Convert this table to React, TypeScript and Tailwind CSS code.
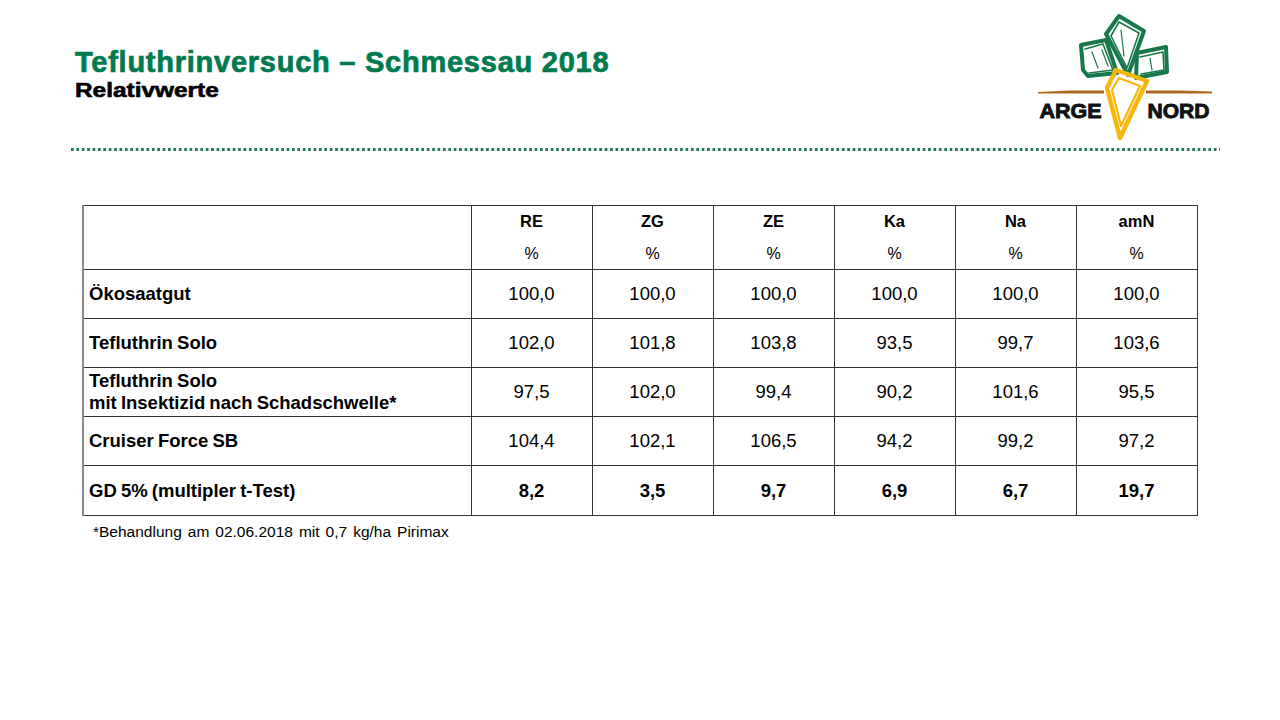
import React from 'react';

// ─── Data ──────────────────────────────────────────────────────────────────

const columns = ['RE', 'ZG', 'ZE', 'Ka', 'Na', 'amN'];

const rows: { label: string[]; values: string[]; bold?: boolean; h: string }[] = [
  { label: ['Ökosaatgut'], values: ['100,0', '100,0', '100,0', '100,0', '100,0', '100,0'], h: 'h-[49px]' },
  { label: ['Tefluthrin Solo'], values: ['102,0', '101,8', '103,8', '93,5', '99,7', '103,6'], h: 'h-[49px]' },
  {
    label: ['Tefluthrin Solo', 'mit Insektizid nach Schadschwelle*'],
    values: ['97,5', '102,0', '99,4', '90,2', '101,6', '95,5'],
    h: 'h-[49px]',
  },
  { label: ['Cruiser Force SB'], values: ['104,4', '102,1', '106,5', '94,2', '99,2', '97,2'], h: 'h-[49px]' },
  {
    label: ['GD 5% (multipler t-Test)'],
    values: ['8,2', '3,5', '9,7', '6,9', '6,7', '19,7'],
    bold: true,
    h: 'h-[50px]',
  },
];

// ─── Logo ──────────────────────────────────────────────────────────────────

function ArgeNordLogo() {
  const green = '#17784c';
  const yellow = '#f6b70c';
  const brown = '#b0681f';
  const word = {
    fontFamily: "'Liberation Sans', Arial, sans-serif",
    fontWeight: 'bold' as const,
    fontSize: 20.5,
    fill: '#111',
    stroke: '#111',
    strokeWidth: 0.9,
  };
  return (
    <svg width="182" height="130" viewBox="1035 12 182 130" className="block">
      {/* ground line */}
      <path d="M1038 92 L1070 90.5 L1104 90.5 L1104 93.5 L1060 93.5 L1038 93.5 Z" fill={brown} />
      <path d="M1146 90.5 L1180 90.5 L1212 91.5 L1212 93.5 L1146 93.5 Z" fill={brown} />

      {/* leaves */}
      <g fill="none" stroke={green} strokeWidth="4" strokeLinejoin="round" strokeLinecap="round">
        <path d="M1081 45 L1106 40 L1117 73 L1088 76 L1083 70 Z" />
        <path d="M1085 49 L1103 44 L1113 70 L1089 73" strokeWidth="1.6" />
        <path d="M1092 52 L1098 68 M1102 50 L1108 66" strokeWidth="1.2" />
        <path d="M1119 16 L1144 31 L1128 75 L1106 34 Z" />
        <path d="M1119 22 L1139 33 L1127 68 L1111 36 Z" strokeWidth="1.6" />
        <path d="M1121 30 L1124 56" strokeWidth="1.2" />
        <path d="M1137 53 L1166 47 L1167 72 L1136 78 Z" />
        <path d="M1140 57 L1163 52 L1164 70 L1141 74" strokeWidth="1.6" />
        <path d="M1150 58 L1152 70" strokeWidth="1.2" />
      </g>

      {/* carrot */}
      <g fill="none" stroke={yellow} strokeWidth="4.5" strokeLinejoin="round" strokeLinecap="round">
        <path d="M1116 70 L1147 81 L1120 138 L1107 88 Z" />
        <path d="M1119 78 L1140 86 L1121 126 L1112 90 Z" strokeWidth="2.2" />
      </g>

      {/* wordmark */}
      <text x="1039.5" y="117.5" textLength="62" lengthAdjust="spacingAndGlyphs" {...word}>
        ARGE
      </text>
      <text x="1147.5" y="117.5" textLength="62" lengthAdjust="spacingAndGlyphs" {...word}>
        NORD
      </text>
    </svg>
  );
}

// ─── Page ──────────────────────────────────────────────────────────────────

export default function App() {
  return (
    <div className="w-[1280px] h-[720px] bg-white overflow-hidden font-['Liberation_Sans',Arial,sans-serif] text-black">
      {/* ── Header ─────────────────────────────────────────────── */}
      <div className="flex items-start h-[148px]">
        <div className="pl-[75px] pt-[48px]">
          <h1 className="text-[29px] leading-none font-bold text-[#007a4e] tracking-[0.75px] [-webkit-text-stroke:0.7px_#007a4e]">
            Tefluthrinversuch – Schmessau 2018
          </h1>
          <p className="mt-[3px] text-[20px] leading-none font-bold inline-block origin-left scale-x-[1.22] [-webkit-text-stroke:0.6px_#000]">
            Relativwerte
          </p>
        </div>
        <div className="ml-auto mr-[63px] mt-[12px]">
          <ArgeNordLogo />
        </div>
      </div>

      {/* ── Dotted rule ────────────────────────────────────────── */}
      <div className="ml-[71px] w-[1149px] h-[3px] bg-[linear-gradient(to_right,#237a52_55%,transparent_55%)] bg-[length:5.4px_3px] bg-repeat-x" />

      {/* ── Table ──────────────────────────────────────────────── */}
      <div className="pl-[82px] pt-[54px]">
        <table className="border-collapse table-fixed w-[1114px]">
          <colgroup>
            <col className="w-[388px]" />
            {columns.map((c) => (
              <col key={c} className="w-[121px]" />
            ))}
          </colgroup>
          <thead>
            <tr className="h-[64px]">
              <th className="border border-[#333] border-l-2 border-l-[#8a8a8a]" />
              {columns.map((c) => (
                <th key={c} className="border border-[#333] align-top p-0 text-[16.5px]">
                  <div className="pt-[5px] leading-[20px] font-bold">{c}</div>
                  <div className="mt-[13px] leading-[20px] font-normal text-[16px]">%</div>
                </th>
              ))}
            </tr>
          </thead>
          <tbody>
            {rows.map((r, i) => (
              <tr key={i} className={r.h}>
                <td className="border border-[#333] border-l-2 border-l-[#8a8a8a] pl-[5px] text-[18.5px] font-bold leading-[22px] [word-spacing:-1px]">
                  {r.label.map((l) => (
                    <div key={l}>{l}</div>
                  ))}
                </td>
                {r.values.map((v, j) => (
                  <td
                    key={j}
                    className={`border border-[#333] text-center text-[18.5px] ${r.bold ? 'font-bold' : 'font-normal'}`}
                  >
                    {v}
                  </td>
                ))}
              </tr>
            ))}
          </tbody>
        </table>
        <p className="pl-[11px] mt-[7px] text-[15.5px] leading-[18px] [word-spacing:1.7px]">
          *Behandlung am 02.06.2018 mit 0,7 kg/ha Pirimax
        </p>
      </div>
    </div>
  );
}
